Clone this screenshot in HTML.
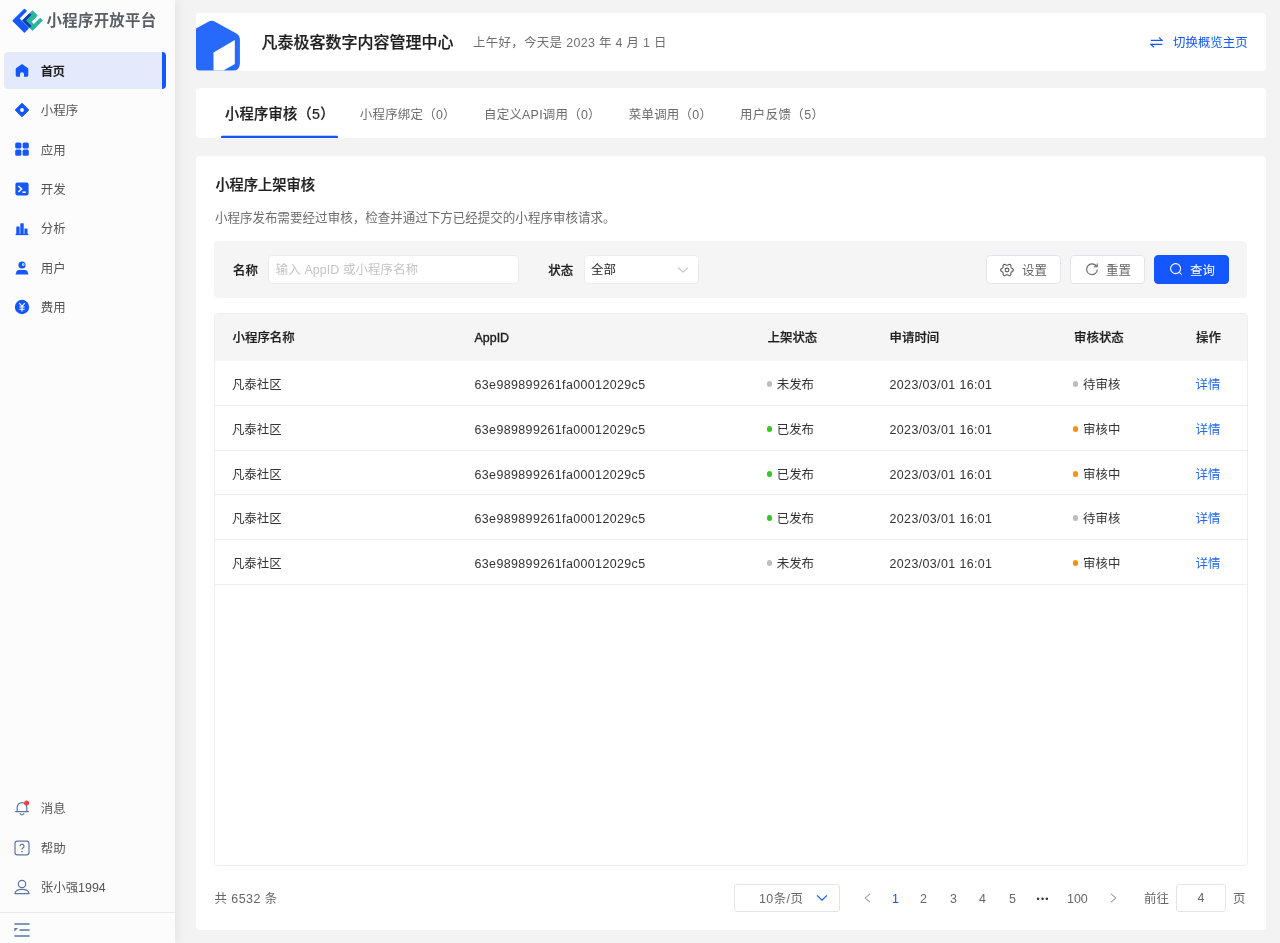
<!DOCTYPE html>
<html lang="zh-CN">
<head>
<meta charset="utf-8">
<title>小程序开放平台</title>
<style>
*{box-sizing:border-box;margin:0;padding:0}
html,body{width:1280px;height:943px;overflow:hidden}
body{will-change:transform;background:#f3f3f3;font-family:"Liberation Sans","Noto Sans CJK SC",sans-serif;font-size:12.44px;color:#333;position:relative}
.abs{position:absolute}
/* sidebar */
#side{position:absolute;left:0;top:0;width:174.5px;height:943px;background:#fcfcfc;box-shadow:2px 0 10px rgba(0,0,0,.07)}
#brand{position:absolute;left:46.6px;top:8.6px;font-size:15.4px;font-weight:700;color:#5a5e65;line-height:24px;white-space:nowrap;letter-spacing:.3px}
.nav{position:absolute;left:4px;width:162px;height:36.5px;border-radius:4px}
.nav.on{background:#e4eafc}
.nav.on::after{content:"";position:absolute;right:0;top:0;width:4px;height:36.5px;background:#1456ff;border-radius:0 4px 4px 0}
.nav span{position:absolute;left:36.8px;top:1.8px;line-height:36.5px;font-size:12.44px;color:#555;white-space:nowrap}
.nav.on span{font-weight:700;color:#1f1f1f;letter-spacing:-.7px}
.nav svg{position:absolute;left:10.2px;top:10.3px;width:16px;height:16px}
.nav.b svg{top:11.1px}
#sfoot{position:absolute;left:0;top:912px;width:174.5px;height:1px;background:#ececec}
/* cards */
.card{position:absolute;left:196px;width:1069.5px;background:#fff;border-radius:4px;overflow:hidden}
#hd{top:13px;height:57.5px}
#hd h1{position:absolute;left:65.5px;top:18px;font-size:16px;line-height:24px;font-weight:500;color:#1f1f1f;white-space:nowrap}
#hd .greet{position:absolute;left:277px;top:20px;font-size:12.44px;line-height:20px;color:#707070;white-space:nowrap;letter-spacing:.33px}
#hd .sw{position:absolute;left:977px;top:20px;font-size:12.44px;line-height:20px;color:#1456f0;white-space:nowrap}
#tabs{top:88px;height:50px}
.tab{position:absolute;top:2.3px;letter-spacing:.25px;line-height:50px;font-size:12.44px;color:#6b6b6b;white-space:nowrap}
.tab.on{font-size:14.22px;font-weight:500;color:#1f1f1f;top:.6px;letter-spacing:.3px}
#tabline{position:absolute;left:25px;top:47px;width:117px;height:3px;background:linear-gradient(rgba(20,86,240,.3) 0,rgba(20,86,240,.3) 1px,#1456f0 1px,#1456f0 3px);border-radius:2px 2px 0 0}
#main{top:156px;height:774px}
#main h2{position:absolute;left:19.4px;top:18.4px;font-size:14.22px;line-height:22px;font-weight:500;color:#1f1f1f;white-space:nowrap}
#main .desc{position:absolute;left:19px;top:53px;font-size:12.53px;line-height:18px;color:#6e6e6e;white-space:nowrap}
#filter{position:absolute;left:18.25px;top:85px;width:1033px;height:56.5px;background:#f5f5f5;border-radius:4px}
.lbl{position:absolute;top:21px;font-size:12.44px;line-height:18px;color:#1f1f1f;font-weight:500;white-space:nowrap}
.inp{position:absolute;top:14px;height:28.5px;background:#fff;border:1px solid #ececec;border-radius:4px;font-size:12.44px;line-height:28px;padding-left:6.5px;color:#c4c4c4;white-space:nowrap}
.inp b{font-weight:400;position:relative;top:-.5px}
.btn{position:absolute;top:14px;height:28.5px;width:74.5px;background:#fff;border:1px solid #e1e4ee;border-radius:4px;font-size:12.44px;line-height:28px;color:#666}
.btn span{position:absolute;left:34.8px;top:.6px;white-space:nowrap}
.btn svg{position:absolute;left:13.5px;top:6.3px;width:14px;height:14px}
.btn.pri{background:#1456ff;border-color:#1456ff;color:#fff}
/* table */
#tbl{position:absolute;left:18px;top:156.5px;width:1033.5px;height:553px;border:1px solid #eee;border-radius:4px;overflow:hidden}
#th{position:absolute;left:0;top:0;width:1032px;height:47px;background:#f5f5f5}
.row{position:absolute;left:0;width:1032px;height:44.8px;border-bottom:1px solid #eee}
.c{position:absolute;top:0;font-size:12.44px;white-space:nowrap;color:#333}
#th .c{line-height:49.6px;font-weight:500;color:#1f1f1f}
.row .c{line-height:48.2px}
.c1{left:17.5px}.c2{left:259.5px}.c3{left:552.5px}.c4{left:674.5px}.c5{left:859px}.c6{left:981px}
.row .c1{left:16.9px}.row .c3{left:551.5px}.row .c5{left:857.9px}.row .c6{left:980.5px}
.row .c2{letter-spacing:.38px}.row .c4{letter-spacing:.38px}
.dot{display:inline-block;width:5.5px;height:5.5px;border-radius:50%;margin-right:4.7px;vertical-align:middle;position:relative;top:-1px}
.g{background:#bdbdbd}.gr{background:#34c724}.or{background:#ff9200}
.lnk{color:#2468f2 !important}
#th .c,.lbl,#main h2,.tab.on,#hd h1{-webkit-text-stroke:.22px currentColor}
#th .c2{-webkit-text-stroke:.4px currentColor}
/* pagination */
#pg{position:absolute;left:0;top:727px;width:1069px;height:30px;font-size:12.44px;color:#666}
#pg .t{position:absolute;top:.5px;line-height:30px;white-space:nowrap}
</style>
</head>
<body>
<div id="side">
  <svg class="abs" style="left:8px;top:4px" width="40" height="34" viewBox="0 0 1109 943">
    <g stroke-linejoin="round" stroke-width="36">
    <path d="M456 150 L502 196 L296 400 L562 667 L455 776 L143 464z" fill="#1557ff" stroke="#1557ff"/>
    <path d="M677 197 L802 321 L630 493 L718 581 L895 405 L946 455 L680 721 L417 457z" fill="#2bb5a0" stroke="#2bb5a0"/>
    <path d="M600 274 L628 302 L473 457 L628 612 L600 641 L417 457z" fill="#0f3eac" stroke="#0f3eac"/>
    </g>
  </svg>
  <div id="brand">小程序开放平台</div>

  <div class="nav on" style="top:52px"><svg viewBox="0 0 16 16"><path d="M8 1.9 L2.3 6 Q1.7 6.5 1.7 7.3 V13.2 a1.6 1.6 0 0 0 1.6 1.6 H6 V12.3 a2 2 0 0 1 4 0 V14.8 H12.7 a1.6 1.6 0 0 0 1.6 -1.6 V7.3 Q14.3 6.5 13.7 6z" fill="#1557ff"/></svg><span>首页</span></div>
  <div class="nav" style="top:91.5px"><svg viewBox="0 0 16 16"><path d="M8 1.2 L14.8 8 L8 14.8 L1.2 8z" fill="#1557ff" stroke="#1456f0" stroke-width="1" stroke-linejoin="round"/><circle cx="8" cy="8" r="1.9" fill="#fff"/></svg><span>小程序</span></div>
  <div class="nav" style="top:131px"><svg viewBox="0 0 16 16"><rect x="1.2" y="1.4" width="6.2" height="6.2" rx="1.6" fill="#1557ff"/><rect x="8.6" y="1.4" width="6.2" height="6.2" rx="1.6" fill="#1557ff"/><rect x="1.2" y="8.6" width="6.2" height="6.2" rx="1.6" fill="#1557ff"/><rect x="8.6" y="8.6" width="6.2" height="6.2" rx="1.6" fill="#1557ff"/></svg><span>应用</span></div>
  <div class="nav" style="top:170.3px"><svg viewBox="0 0 16 16"><rect x="1.4" y="1.6" width="13.2" height="12.8" rx="1.8" fill="#1557ff"/><path d="M4.4 5 L7.6 8 L4.4 11" fill="none" stroke="#fff" stroke-width="1.5"/><path d="M8.4 11.2 H11.8" stroke="#fff" stroke-width="1.5"/></svg><span>开发</span></div>
  <div class="nav" style="top:209.7px"><svg viewBox="0 0 16 16"><g transform="translate(0,.8)" fill="#1557ff"><rect x="2.3" y="5.6" width="3.3" height="8" rx=".5"/><rect x="6.3" y="2.4" width="3.4" height="11" rx=".5"/><rect x="10.4" y="7.6" width="3.1" height="6" rx=".5"/><rect x="1.6" y="13" width="12.8" height="1.3"/></g></svg><span>分析</span></div>
  <div class="nav" style="top:249px"><svg viewBox="0 0 16 16"><g transform="translate(0,1.2)"><circle cx="8" cy="4.8" r="3.6" fill="#1557ff"/><path d="M1.5 14.4 L2.5 11.2 Q3 9.7 4.6 9.7 H11.4 Q13 9.7 13.5 11.2 L14.5 14.4z" fill="#1557ff"/><circle cx="9.3" cy="4.4" r="1.3" fill="#fff"/><circle cx="9.9" cy="4.4" r=".6" fill="#1557ff"/></g></svg><span>用户</span></div>
  <div class="nav" style="top:288.4px"><svg viewBox="0 0 16 16"><circle cx="8" cy="8" r="7.2" fill="#1557ff"/><path d="M5.4 4.2 L8 7.6 L10.6 4.2 M5.4 8 H10.6 M5.4 10.2 H10.6 M8 7.6 V12.4" fill="none" stroke="#fff" stroke-width="1.1"/></svg><span>费用</span></div>

  <div class="nav b" style="top:789.4px"><svg viewBox="0 0 16 16"><path d="M3.2 11.6 V7.4 a4.8 4.8 0 0 1 9.6 0 V11.6 M1.6 11.6 H14.4 M6.2 13.6 a1.9 1.9 0 0 0 3.6 0" fill="none" stroke="#5b75a3" stroke-width="1.2" stroke-linecap="round"/><circle cx="12.6" cy="3.1" r="2.5" fill="#f53f3f"/></svg><span>消息</span></div>
  <div class="nav b" style="top:829px"><svg viewBox="0 0 16 16"><rect x="1" y="1.2" width="14" height="13.6" rx="2.4" fill="none" stroke="#5b75a3" stroke-width="1.2"/><path d="M6 6.2 a2 2 0 1 1 2.9 1.8 c-.7 .4 -.9 .8 -.9 1.6" fill="none" stroke="#5b75a3" stroke-width="1.2"/><circle cx="8" cy="11.6" r=".8" fill="#5b75a3"/></svg><span>帮助</span></div>
  <div class="nav b" style="top:868.3px"><svg viewBox="0 0 16 16"><circle cx="8" cy="5" r="3.7" fill="none" stroke="#5b75a3" stroke-width="1.2"/><path d="M0.9 14.6 C1.3 11.6 3.8 10.4 8 10.4 S14.7 11.6 15.1 14.6z" fill="none" stroke="#5b75a3" stroke-width="1.2" stroke-linejoin="round"/></svg><span>张小强1994</span></div>
  <div id="sfoot"></div>
  <svg class="abs" style="left:14px;top:923px" width="16" height="14" viewBox="0 0 16 14"><path d="M0.4 1 H15.6 M5.6 7 H15.6 M0.4 13 H15.6" stroke="#5b75a3" stroke-width="1.3" fill="none"/><path d="M0.4 5 H4 L0.4 8.6z" fill="#5b75a3"/></svg>
</div>
<div class="card" id="hd">
  <svg class="abs" style="left:0;top:7px" width="45" height="52" viewBox="0 0 45 52"><path d="M0 8.5 L12.4 1.7 Q15.7 -0.1 19 1.7 L40.4 13.6 Q43.9 15.6 43.9 19.6 V43.2 Q43.9 50.6 36.6 50.6 H0z" fill="#2769fa"/><path d="M17.5 32.4 L38.8 20.1 V43.9 L27.4 50.6 H17.5z" fill="#fff"/></svg>
  <h1>凡泰极客数字内容管理中心</h1>
  <div class="greet">上午好，今天是 2023 年 4 月 1 日</div>
  <svg class="abs" style="left:953.6px;top:23px" width="13" height="13" viewBox="0 0 14 13"><path d="M0.8 4.2 H13 L9.6 1 M13.2 8.6 H1 L4.4 11.8" fill="none" stroke="#1456f0" stroke-width="1.3"/></svg>
  <div class="sw">切换概览主页</div>
</div>
<div class="card" id="tabs">
  <div class="tab on" style="left:29px">小程序审核（5）</div>
  <div class="tab" style="left:163.8px">小程序绑定（0）</div>
  <div class="tab" style="left:288px">自定义API调用（0）</div>
  <div class="tab" style="left:432.8px">菜单调用（0）</div>
  <div class="tab" style="left:544px;letter-spacing:.4px">用户反馈（5）</div>
  <div id="tabline"></div>
</div>
<div class="card" id="main">
  <h2>小程序上架审核</h2>
  <div class="desc">小程序发布需要经过审核，检查并通过下方已经提交的小程序审核请求。</div>
  <div id="filter">
    <div class="lbl" style="left:18.8px">名称</div>
    <div class="inp" style="left:54px;width:251px;letter-spacing:.1px">输入 AppID 或小程序名称</div>
    <div class="lbl" style="left:334px">状态</div>
    <div class="inp" style="left:370px;width:115px;color:#1f1f1f;padding-left:5.7px">全部<svg class="abs" style="left:92px;top:10px" width="12" height="8" viewBox="0 0 12 8"><path d="M1 1.4 L6 6.2 L11 1.4" fill="none" stroke="#c4c4c4" stroke-width="1.1"/></svg></div>
    <div class="btn" style="left:772px"><svg viewBox="0 0 14 14" style="left:13.2px;top:6.9px"><path d="M13.40 7.00 L13.26 7.55 L12.88 8.04 L12.36 8.44 L11.82 8.75 L11.36 9.03 L11.07 9.35 L10.94 9.76 L10.93 10.29 L10.92 10.92 L10.84 11.58 L10.61 12.15 L10.20 12.54 L9.66 12.70 L9.04 12.61 L8.44 12.36 L7.89 12.05 L7.42 11.80 L7.00 11.70 L6.58 11.80 L6.11 12.05 L5.56 12.36 L4.96 12.61 L4.34 12.70 L3.80 12.54 L3.39 12.15 L3.16 11.58 L3.08 10.92 L3.07 10.29 L3.06 9.76 L2.93 9.35 L2.64 9.03 L2.18 8.75 L1.64 8.44 L1.12 8.04 L0.74 7.55 L0.60 7.00 L0.74 6.45 L1.12 5.96 L1.64 5.56 L2.18 5.25 L2.64 4.97 L2.93 4.65 L3.06 4.24 L3.07 3.71 L3.08 3.08 L3.16 2.42 L3.39 1.85 L3.80 1.46 L4.34 1.30 L4.96 1.39 L5.56 1.64 L6.11 1.95 L6.58 2.20 L7.00 2.30 L7.42 2.20 L7.89 1.95 L8.44 1.64 L9.04 1.39 L9.66 1.30 L10.20 1.46 L10.61 1.85 L10.84 2.42 L10.92 3.08 L10.93 3.71 L10.94 4.24 L11.07 4.65 L11.36 4.97 L11.82 5.25 L12.36 5.56 L12.88 5.96 L13.26 6.45z" fill="none" stroke="#5c5c5c" stroke-width="1.1" stroke-linejoin="round"/><circle cx="7" cy="7" r="1.9" fill="none" stroke="#5c5c5c" stroke-width="1.1"/></svg><span>设置</span></div>
    <div class="btn" style="left:856px"><svg viewBox="0 0 14 14"><path d="M11.6 4.4 A5.4 5.4 0 1 0 12.4 7.6" fill="none" stroke="#666" stroke-width="1.1"/><path d="M12.2 1.6 V4.8 H9" fill="none" stroke="#666" stroke-width="1.1"/></svg><span>重置</span></div>
    <div class="btn pri" style="left:940px"><svg viewBox="0 0 14 14"><circle cx="6.6" cy="6.6" r="5" fill="none" stroke="#fff" stroke-width="1.1"/><path d="M10.4 10.4 L12.6 12.6" stroke="#fff" stroke-width="1.1"/></svg><span>查询</span></div>
  </div>
  <div id="tbl">
    <div id="th"><div class="c c1">小程序名称</div><div class="c c2">AppID</div><div class="c c3">上架状态</div><div class="c c4">申请时间</div><div class="c c5">审核状态</div><div class="c c6">操作</div></div>
    <div class="row" style="top:47px;height:45px"><div class="c c1">凡泰社区</div><div class="c c2">63e989899261fa00012029c5</div><div class="c c3"><i class="dot g"></i>未发布</div><div class="c c4">2023/03/01 16:01</div><div class="c c5"><i class="dot g"></i>待审核</div><div class="c c6 lnk">详情</div></div>
    <div class="row" style="top:92px;height:45px"><div class="c c1">凡泰社区</div><div class="c c2">63e989899261fa00012029c5</div><div class="c c3"><i class="dot gr"></i>已发布</div><div class="c c4">2023/03/01 16:01</div><div class="c c5"><i class="dot or"></i>审核中</div><div class="c c6 lnk">详情</div></div>
    <div class="row" style="top:137px;height:44px"><div class="c c1">凡泰社区</div><div class="c c2">63e989899261fa00012029c5</div><div class="c c3"><i class="dot gr"></i>已发布</div><div class="c c4">2023/03/01 16:01</div><div class="c c5"><i class="dot or"></i>审核中</div><div class="c c6 lnk">详情</div></div>
    <div class="row" style="top:181px;height:45px"><div class="c c1">凡泰社区</div><div class="c c2">63e989899261fa00012029c5</div><div class="c c3"><i class="dot gr"></i>已发布</div><div class="c c4">2023/03/01 16:01</div><div class="c c5"><i class="dot g"></i>待审核</div><div class="c c6 lnk">详情</div></div>
    <div class="row" style="top:226px;height:45px"><div class="c c1">凡泰社区</div><div class="c c2">63e989899261fa00012029c5</div><div class="c c3"><i class="dot g"></i>未发布</div><div class="c c4">2023/03/01 16:01</div><div class="c c5"><i class="dot or"></i>审核中</div><div class="c c6 lnk">详情</div></div>
  </div>
  <div id="pg">
    <div class="t" style="left:18.5px;letter-spacing:.45px">共 6532 条</div>
    <div class="abs" style="left:538px;top:1px;width:106px;height:28px;border:1px solid #e1e4ee;border-radius:3px;background:#fff"><div class="t" style="left:24px;line-height:26px;letter-spacing:.45px">10条/页</div><svg class="abs" style="left:80.9px;top:9px" width="12" height="8" viewBox="0 0 12 8"><path d="M1 1.4 L6 6.2 L11 1.4" fill="none" stroke="#1456f0" stroke-width="1.2"/></svg></div>
    <svg class="abs" style="left:668.2px;top:10.2px" width="7" height="10" viewBox="0 0 7 10"><path d="M6 0.8 L1.2 5 L6 9.2" fill="none" stroke="#7d7d7d" stroke-width="1"/></svg>
    <div class="t" style="left:696px;color:#1456f0;font-weight:500">1</div>
    <div class="t" style="left:724px">2</div>
    <div class="t" style="left:754px">3</div>
    <div class="t" style="left:783px">4</div>
    <div class="t" style="left:813px">5</div>
    <div class="t" style="left:840.6px;font-size:9px;letter-spacing:1.2px;color:#333;top:1px">•••</div>
    <div class="t" style="left:871px">100</div>
    <svg class="abs" style="left:914.1px;top:10.2px" width="7" height="10" viewBox="0 0 7 10"><path d="M1 0.8 L5.8 5 L1 9.2" fill="none" stroke="#7d7d7d" stroke-width="1"/></svg>
    <div class="t" style="left:948px">前往</div>
    <div class="abs" style="left:980px;top:1px;width:50px;height:28px;border:1px solid #e1e4ee;border-radius:3px;background:#fff;text-align:center;line-height:26px">4</div>
    <div class="t" style="left:1037px">页</div>
  </div>
</div>
</body>
</html>
